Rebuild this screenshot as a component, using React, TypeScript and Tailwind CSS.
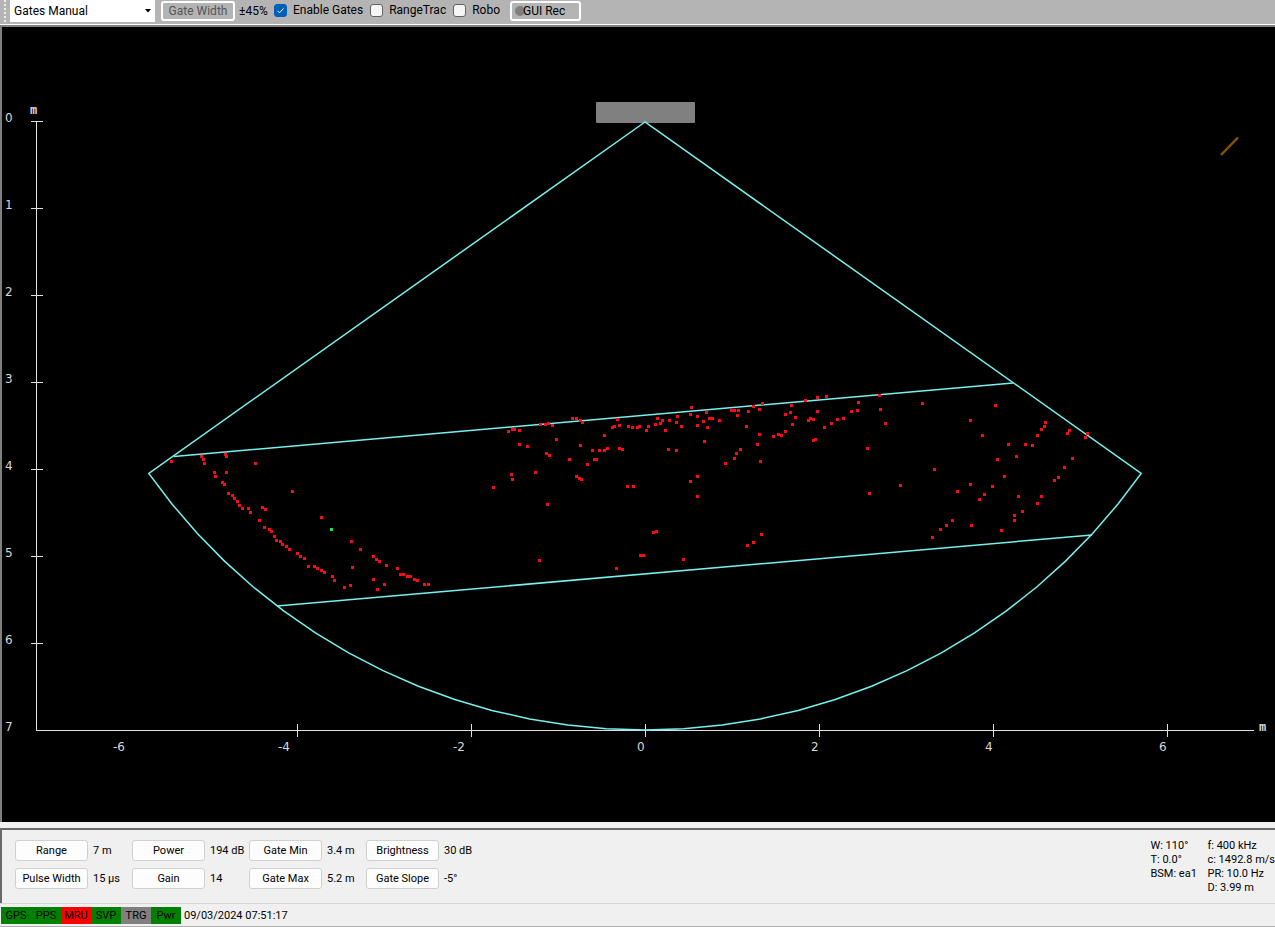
import { useState } from 'react'

type Point = [number, number]

const ORIGIN: Point = [645, 122]
const RADIUS = 608
const HALF_ANGLE = (54.7 * Math.PI) / 180
const ARC_STEPS = 30

const DETECTIONS: Point[] = [
  [171, 461], [201, 456], [203, 459], [204, 463], [225, 454], [226, 456], [255, 463], [214, 472], [215, 476],
  [226, 472], [222, 482], [224, 484], [292, 491], [228, 493], [232, 495], [234, 498], [237, 501], [239, 505],
  [242, 508], [248, 508], [250, 512], [262, 507], [265, 509], [259, 520], [264, 527], [269, 529], [271, 531],
  [274, 536], [276, 540], [280, 541], [282, 544], [286, 546], [289, 549], [297, 553], [300, 556], [304, 558],
  [308, 566], [314, 566], [317, 568], [321, 570], [324, 572], [332, 576], [334, 580], [344, 587], [350, 585],
  [321, 517], [351, 541], [360, 549], [352, 567], [373, 556], [376, 559], [379, 561], [386, 565], [373, 579],
  [384, 584], [377, 589], [397, 568], [400, 574], [403, 574], [407, 576], [410, 576], [414, 579], [417, 580],
  [424, 584], [428, 584],
  [493, 487], [511, 474], [512, 479], [535, 472], [547, 504], [539, 560], [508, 431], [512, 429], [514, 429],
  [519, 430], [519, 444], [527, 446], [540, 424], [545, 424], [548, 423], [552, 425], [556, 439], [546, 453],
  [549, 455], [569, 459], [572, 418], [576, 418], [580, 420], [582, 422], [580, 445], [576, 476], [579, 478],
  [581, 479], [587, 464], [594, 459], [596, 459], [592, 450], [599, 450], [604, 450], [607, 448], [604, 435],
  [612, 427], [614, 426], [619, 425], [617, 419], [619, 448], [622, 449], [628, 426], [632, 427], [637, 427],
  [639, 426], [646, 430], [648, 426], [655, 424], [657, 418], [660, 423], [662, 420], [665, 430], [669, 420],
  [676, 422], [677, 416], [681, 426], [690, 414], [691, 407], [668, 449], [676, 450], [627, 486], [633, 486],
  [653, 532], [656, 531], [640, 555], [643, 555], [616, 568], [683, 559],
  [697, 416], [697, 425], [703, 421], [706, 412], [709, 418], [712, 418], [707, 427], [719, 420], [704, 441],
  [690, 481], [697, 476], [697, 496], [731, 410], [734, 410], [738, 410], [737, 415], [748, 411], [753, 406],
  [762, 403], [759, 409], [746, 426], [759, 434], [757, 444], [740, 449], [736, 453], [734, 458], [725, 463],
  [760, 461], [773, 436], [778, 434], [781, 435], [785, 431], [785, 414], [790, 412], [791, 405], [795, 417],
  [792, 424], [805, 400], [817, 397], [826, 396], [817, 411], [808, 420], [810, 418], [813, 419], [813, 440],
  [815, 439], [824, 427], [831, 423], [837, 419], [843, 418], [851, 411], [857, 410], [858, 402], [879, 395],
  [880, 409], [885, 423], [867, 448], [869, 493], [900, 485], [747, 545], [753, 542], [761, 534],
  [922, 403], [995, 405], [970, 420], [982, 435], [934, 469], [970, 484], [957, 491], [979, 499], [984, 494],
  [992, 486], [1004, 476], [997, 459], [1008, 444], [1016, 456], [1025, 444], [1032, 445], [1037, 435],
  [1041, 429], [1044, 426], [1045, 422], [1067, 433], [1069, 430], [1085, 437], [1087, 433], [1072, 458],
  [1064, 467], [1058, 477], [1054, 480], [1041, 496], [1037, 503], [1018, 496], [1022, 511], [1014, 515],
  [1014, 520], [1001, 530], [971, 525], [952, 520], [946, 525], [940, 529], [932, 537],
]

const X_LABELS = [
  { value: -6, x: 113 },
  { value: -4, x: 278 },
  { value: -2, x: 453 },
  { value: 0, x: 637 },
  { value: 2, x: 811 },
  { value: 4, x: 985 },
  { value: 6, x: 1159 },
]

const PARAMS = [
  { name: 'Range', value: '7 m' },
  { name: 'Power', value: '194 dB' },
  { name: 'Gate Min', value: '3.4 m' },
  { name: 'Brightness', value: '30 dB' },
  { name: 'Pulse Width', value: '15 µs' },
  { name: 'Gain', value: '14' },
  { name: 'Gate Max', value: '5.2 m' },
  { name: 'Gate Slope', value: '-5°' },
]

const STATUS = [
  { name: 'GPS', className: 'bg-[#008000]' },
  { name: 'PPS', className: 'bg-[#008000]' },
  { name: 'MRU', className: 'bg-[#ff0000]' },
  { name: 'SVP', className: 'bg-[#008000]' },
  { name: 'TRG', className: 'bg-[#808080]' },
  { name: 'Pwr', className: 'bg-[#008000]' },
]

function sectorPoints() {
  const points: Point[] = [ORIGIN]
  for (let i = 0; i <= ARC_STEPS; i++) {
    const angle = -HALF_ANGLE + (2 * HALF_ANGLE * i) / ARC_STEPS
    points.push([ORIGIN[0] + RADIUS * Math.sin(angle), ORIGIN[1] + RADIUS * Math.cos(angle)])
  }
  return points.map((p) => p.join(',')).join(' ')
}

interface CheckProps {
  label: string
  checked: boolean
  onChange: (checked: boolean) => void
}

function Check({ label, checked, onChange }: CheckProps) {
  return (
    <label className="flex items-center gap-1.5 whitespace-nowrap">
      <span className="relative flex">
        <input
          type="checkbox"
          checked={checked}
          onChange={(e) => onChange(e.target.checked)}
          className="size-[13px] appearance-none rounded-[3px] border border-[#626262] bg-[#f5f5f5] checked:border-[#005fb8] checked:bg-[#005fb8]"
        />
        {checked && (
          <svg viewBox="0 0 13 13" className="pointer-events-none absolute inset-0 size-[13px]">
            <path d="M3.5 6.8l2 2 4-4.3" fill="none" stroke="#fff" strokeWidth="1" />
          </svg>
        )}
      </span>
      {label}
    </label>
  )
}

function Toolbar() {
  const [enableGates, setEnableGates] = useState(true)
  const [rangeTrac, setRangeTrac] = useState(false)
  const [robo, setRobo] = useState(false)

  return (
    <header className="flex h-[25px] items-start border-b border-white bg-[#b4b4b4] text-[12px] leading-[20px]">
      <div className="ml-1 mr-1 h-[22px] w-0.5 border-l-2 border-dotted border-[#eeeeee]" />
      <div className="relative">
        <select
          aria-label="Gates mode"
          defaultValue="manual"
          className="block h-[22px] w-[145px] appearance-none bg-white pl-1 pr-5 outline-none"
        >
          <option value="manual">Gates Manual</option>
          <option value="auto">Gates Auto</option>
        </select>
        <svg viewBox="0 0 6 4" className="pointer-events-none absolute right-1 top-[9px] h-[4px] w-[6px]">
          <path d="M0 0h6L3 3.5z" fill="#000" />
        </svg>
      </div>
      <button
        disabled
        className="ml-1.5 mt-px h-5 w-[74px] rounded-[3px] border-2 border-white bg-[#b4b4b4] leading-[16px] text-[#555555]"
      >
        Gate Width
      </button>
      <span className="ml-1 mt-px w-[35px]">±45%</span>
      <div className="flex gap-[7px]">
        <Check label="Enable Gates" checked={enableGates} onChange={setEnableGates} />
        <Check label="RangeTrac" checked={rangeTrac} onChange={setRangeTrac} />
        <Check label="Robo" checked={robo} onChange={setRobo} />
      </div>
      <button className="ml-2.5 mt-px flex h-5 w-[71px] items-center rounded-[3px] border-2 border-white bg-[#b4b4b4] pl-[3px] leading-[16px]">
        <span className="size-2.5 rounded-full bg-[#808080]" />
        <span className="-ml-0.5">GUI Rec</span>
      </button>
    </header>
  )
}

function SonarPlot() {
  return (
    <main className="border-l-2 border-t-2 border-[#808080] bg-black">
      <svg viewBox="2 27 1273 795" className="block w-full">
        <g stroke="#e0e0e0" shapeRendering="crispEdges">
          <path d="M36.5 122V730.5H1254" fill="none" />
          {[0, 1, 2, 3, 4, 5, 6].map((m) => (
            <path key={m} d={`M31 ${121.5 + m * 87}h12`} />
          ))}
          {[-4, -2, 0, 2, 4, 6].map((m) => (
            <path key={m} d={`M${645.5 + m * 87} 724v13`} />
          ))}
        </g>
        <g fill="#d8d8d8" className="font-['DejaVu_Sans',sans-serif] text-[12px]">
          {[0, 1, 2, 3, 4, 5, 6, 7].map((m) => (
            <text key={m} x="5" y={122 + m * 87}>
              {m}
            </text>
          ))}
          {X_LABELS.map(({ value, x }) => (
            <text key={value} x={x} y="751">
              {value}
            </text>
          ))}
        </g>
        <g fill="#d8d8d8" className="font-['DejaVu_Sans_Mono',monospace] text-[12px] font-bold">
          <text x="30" y="114">
            m
          </text>
          <text x="1259" y="731">
            m
          </text>
        </g>
        <rect x="596" y="102" width="99" height="21" rx="1" fill="#808080" />
        <g fill="none" stroke="#76f2ee" strokeWidth="1.5">
          <polygon points={sectorPoints()} />
          <path d="M174 456.500L1013 383" />
          <path d="M277 606L1092 535" />
        </g>
        <path d="M1221 155L1238 137.500" stroke="#8a5200" strokeWidth="2.5" />
        <g fill="#ff0a14">
          {DETECTIONS.map(([x, y]) => (
            <rect key={`${x}-${y}`} x={x - 1} y={y - 1} width="3" height="3" />
          ))}
        </g>
        <rect x="330" y="528" width="3" height="3" fill="#14e63c" />
      </svg>
    </main>
  )
}

function ParameterPanel() {
  return (
    <section className="mt-1.5 flex h-[75px] justify-between border-l-2 border-t-2 border-[#696969] leading-[14px]">
      <div className="ml-[13px] mt-2.5 grid grid-cols-[repeat(4,117px)] content-start gap-y-[7px]">
        {PARAMS.map(({ name, value }) => (
          <div key={name} className="flex items-center gap-[5px] whitespace-nowrap">
            <button className="h-[21px] w-[73px] rounded-[3px] border border-[#d0d0d0] bg-[#fdfdfd]">{name}</button>
            <span>{value}</span>
          </div>
        ))}
      </div>
      <div className="mt-[9px] flex whitespace-nowrap">
        <div className="w-[57px]">
          <p>W: 110°</p>
          <p>T: 0.0°</p>
          <p>BSM: ea1</p>
        </div>
        <div>
          <p>f: 400 kHz</p>
          <p>c: 1492.8 m/s</p>
          <p>PR: 10.0 Hz</p>
          <p>D: 3.99 m</p>
        </div>
      </div>
    </section>
  )
}

function StatusBar() {
  return (
    <footer className="flex h-6 items-center border-b border-t border-b-[#b0b0b0] border-t-[#d7d7d7] pl-px leading-[17px]">
      {STATUS.map(({ name, className }) => (
        <span key={name} className={`h-[17px] w-[30px] text-center ${className}`}>
          {name}
        </span>
      ))}
      <time className="ml-[3px]">09/03/2024 07:51:17</time>
    </footer>
  )
}

export default function App() {
  return (
    <div className="bg-[#f0f0f0] font-[Roboto,sans-serif] text-[11px] text-black">
      <Toolbar />
      <SonarPlot />
      <ParameterPanel />
      <StatusBar />
    </div>
  )
}
